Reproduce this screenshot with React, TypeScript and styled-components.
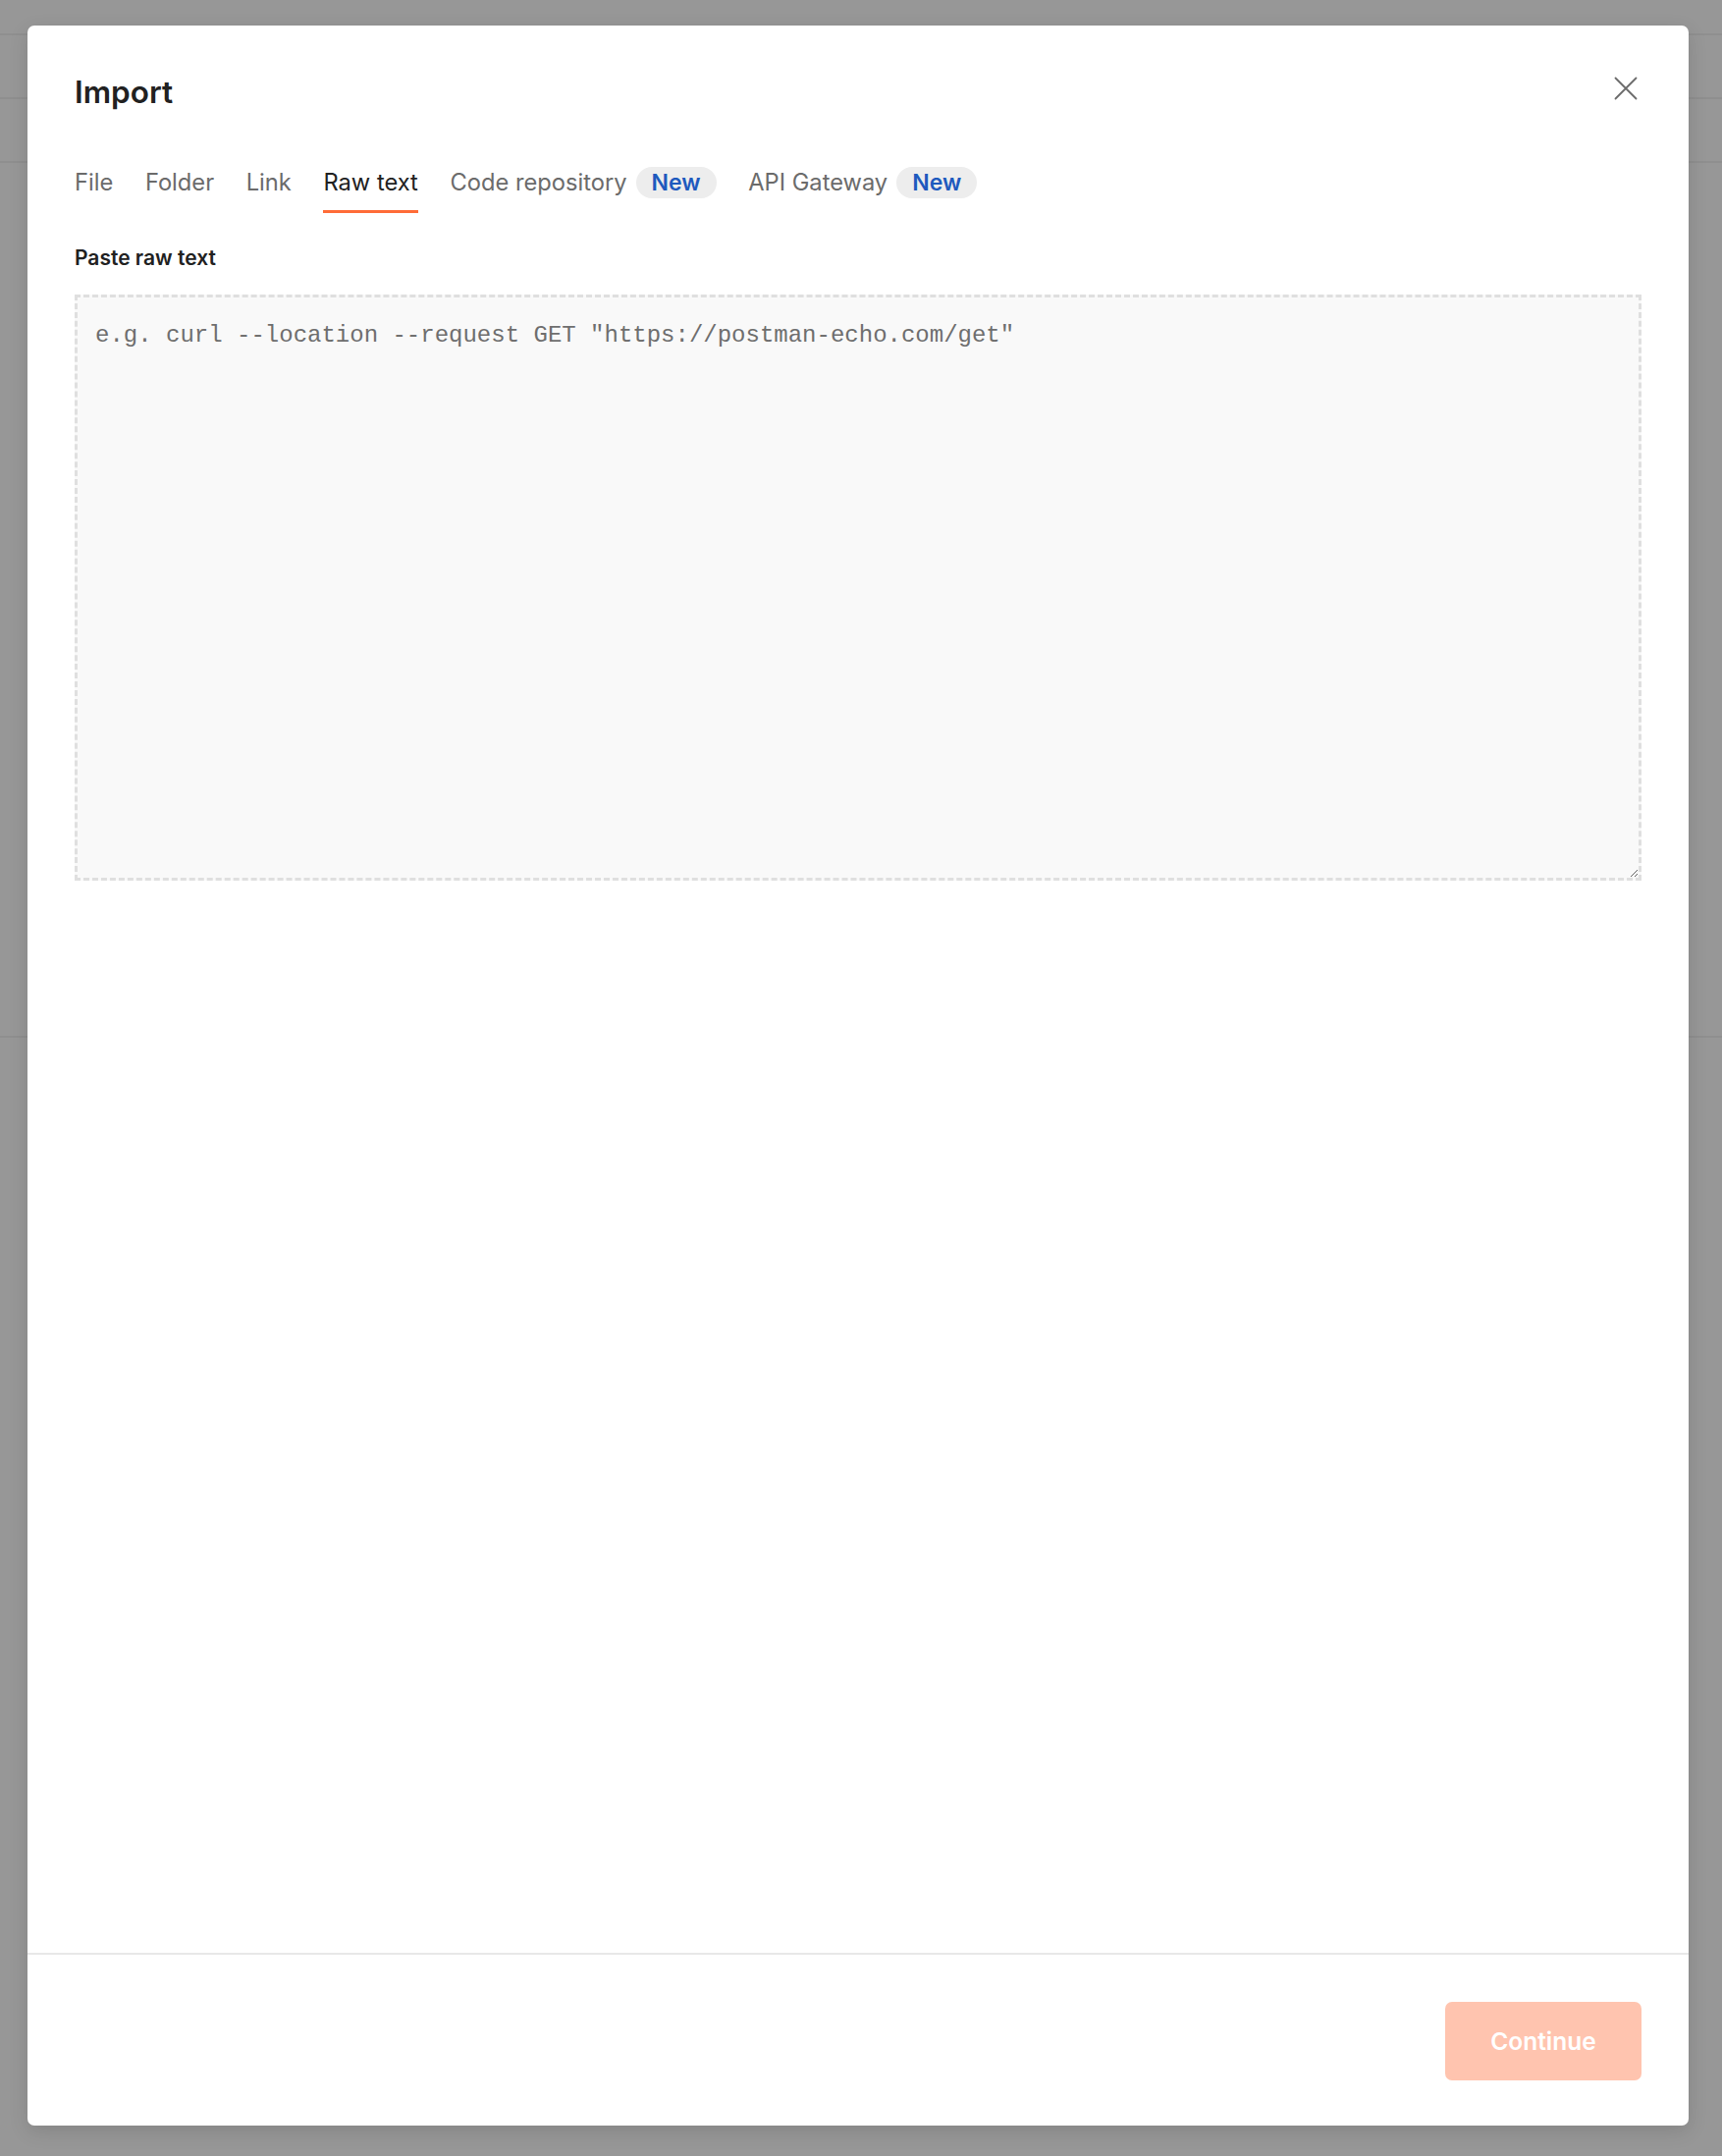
import React from 'react';
import styled, { createGlobalStyle } from 'styled-components';

const Global = createGlobalStyle`
  html, body { margin: 0; padding: 0; }
  body {
    font-family: Inter, "Noto Sans", "Liberation Sans", sans-serif;
    background: #979797;
  }
  * { box-sizing: border-box; }
`;

const Screen = styled.div`
  position: relative;
  width: 1754px;
  height: 2196px;
  overflow: hidden;
  background: #979797;
`;

const Backdrop = styled.div`
  display: flex;
  flex-direction: column;
`;

const BackdropBand = styled.div<{ $h: number }>`
  height: ${(p) => p.$h}px;
  border-bottom: 2px solid #8f8f8f;
`;

const Modal = styled.div`
  position: absolute;
  top: 26px;
  left: 28px;
  width: 1692px;
  height: 2139px;
  background: #ffffff;
  border-radius: 7px;
  display: flex;
  flex-direction: column;
  box-shadow: 0 6px 20px rgba(0, 0, 0, 0.12);
`;

const Header = styled.div`
  display: flex;
  justify-content: space-between;
  align-items: flex-start;
  padding: 49px 48px 0;
`;

const Title = styled.h2`
  margin: 0;
  font-size: 31.5px;
  font-weight: 600;
  line-height: 38px;
  color: #212121;
`;

const CloseButton = styled.button`
  width: 32px;
  height: 32px;
  margin-top: -1px;
  padding: 0;
  border: none;
  background: none;
  display: flex;
  align-items: center;
  justify-content: center;
  cursor: pointer;
`;

const Tabs = styled.div`
  display: flex;
  gap: 32.6px;
  padding: 0 48px;
  margin-top: 57px;
`;

const Tab = styled.button<{ $active?: boolean }>`
  display: flex;
  align-items: center;
  gap: 9px;
  padding: 0 0 12.5px;
  margin: 0;
  border: none;
  border-bottom: 3.5px solid ${(p) => (p.$active ? '#ff6c37' : 'transparent')};
  background: none;
  font-family: inherit;
  font-size: 23.7px;
  font-weight: 400;
  line-height: normal;
  color: ${(p) => (p.$active ? '#212121' : '#6b6b6b')};
  cursor: pointer;
`;

const Badge = styled.span`
  display: flex;
  align-items: center;
  height: 31.5px;
  padding: 0 16px;
  border-radius: 16px;
  background: #ededed;
  color: #1e5abe;
  font-size: 23px;
  font-weight: 600;
`;

const Body = styled.div`
  flex: 1;
  padding: 33px 48px 0;
`;

const Label = styled.label`
  display: block;
  font-size: 21px;
  font-weight: 600;
  line-height: 25.4px;
  color: #212121;
  margin-bottom: 25px;
`;

const RawText = styled.textarea`
  display: block;
  width: 100%;
  height: 597px;
  margin: 0;
  border: 3px dashed #dfdfdf;
  border-radius: 0;
  background: #f9f9f9;
  padding: 21px 18px;
  font-family: "Liberation Mono", "DejaVu Sans Mono", monospace;
  font-size: 24px;
  line-height: 1.5;
  color: #212121;
  resize: vertical;
  outline: none;
  &::placeholder {
    color: #6e6e6e;
  }
`;

const Footer = styled.div`
  display: flex;
  justify-content: flex-end;
  border-top: 2px solid #e8e8e8;
  padding: 48px 48px 46px;
`;

const PrimaryButton = styled.button`
  width: 200px;
  height: 80px;
  border: none;
  border-radius: 7px;
  background: #ffc4af;
  color: #ffffff;
  font-family: inherit;
  font-size: 24.5px;
  font-weight: 600;
  cursor: not-allowed;
`;

const tabs = [
  { label: 'File' },
  { label: 'Folder' },
  { label: 'Link' },
  { label: 'Raw text', active: true },
  { label: 'Code repository', badge: 'New' },
  { label: 'API Gateway', badge: 'New' },
];

export default function App() {
  return (
    <>
      <Global />
      <Screen>
        <Backdrop>
          <BackdropBand $h={36} />
          <BackdropBand $h={65} />
          <BackdropBand $h={65} />
          <BackdropBand $h={891} />
        </Backdrop>
        <Modal role="dialog" aria-label="Import">
          <Header>
            <Title>Import</Title>
            <CloseButton aria-label="Close">
              <svg width="32" height="32" viewBox="0 0 32 32" fill="none">
                <path d="M5.5 5.5 L26.5 26.5 M26.5 5.5 L5.5 26.5" stroke="#6b6b6b" strokeWidth="1.8" strokeLinecap="round" />
              </svg>
            </CloseButton>
          </Header>
          <Tabs>
            {tabs.map((t) => (
              <Tab key={t.label} $active={t.active}>
                {t.label}
                {t.badge && <Badge>{t.badge}</Badge>}
              </Tab>
            ))}
          </Tabs>
          <Body>
            <Label htmlFor="raw">Paste raw text</Label>
            <RawText
              id="raw"
              placeholder={'e.g. curl --location --request GET "https://postman-echo.com/get"'}
            />
          </Body>
          <Footer>
            <PrimaryButton disabled>Continue</PrimaryButton>
          </Footer>
        </Modal>
      </Screen>
    </>
  );
}
